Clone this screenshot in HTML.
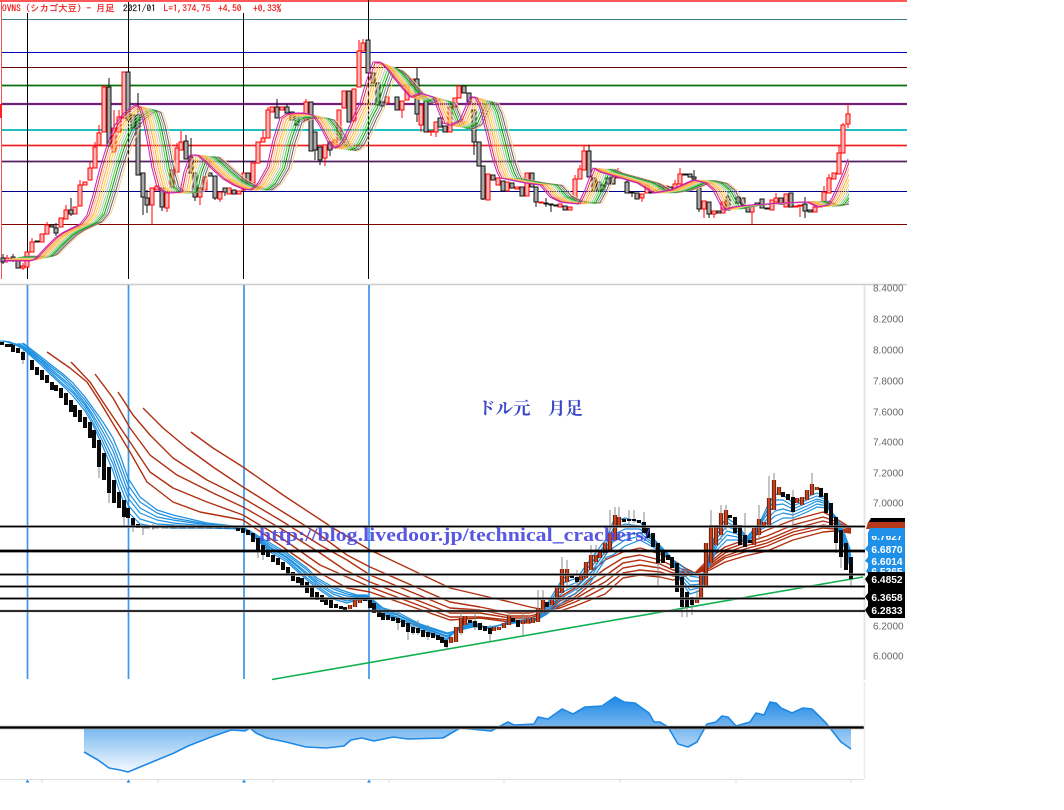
<!DOCTYPE html>
<html lang="ja"><head><meta charset="utf-8"><title>Chart</title>
<style>html,body{margin:0;padding:0;background:#fff}svg{display:block}</style></head>
<body>
<svg xmlns="http://www.w3.org/2000/svg" width="1064" height="810" viewBox="0 0 1064 810">
<defs>
<clipPath id="c1"><rect x="0" y="0" width="849" height="280"/></clipPath>
<clipPath id="c2"><rect x="866" y="536" width="40" height="8"/></clipPath>
<clipPath id="c3"><rect x="866" y="565" width="40" height="7"/></clipPath>
<linearGradient id="g" gradientUnits="userSpaceOnUse" x1="0" y1="697" x2="0" y2="775"><stop offset="0" stop-color="#1e88e5"/><stop offset="1" stop-color="#ffffff"/></linearGradient>
<polyline id="r" fill="none" stroke-width="1" stroke-linejoin="round" points="2,261 30,261 35,259 45,248 55,238 62,233 70,229 80,224 87,215 93,195 100,168 107,145 115,125 122,115 130,108 135,105 139,107 143,120 148,145 152,168 157,187 163,192 170,193 180,192 184,172 190,155 197,155 205,162 213,170 223,179 233,185 243,189 250,190 258,183 267,167 273,140 280,118 286,114 293,113 303,113 312,115 318,123 323,132 328,142 333,148 338,146 343,140 350,125 355,113 360,103 366,82 373,62 380,62 386,68 393,77 402,88 410,97 420,93 433,97 438,110 443,123 450,125 460,120 465,108 470,97 475,97 480,108 483,120 488,140 492,157 497,172 500,178 510,180 525,183 540,185 550,197 560,202 567,203 578,204 585,190 593,168 600,172 617,177 637,183 653,193 670,190 693,180 705,183 713,190 718,200 723,210 733,207 750,205 783,203 807,202 817,207 827,205 832,198 837,187 843,173 848,159"/>
<path id="bc" fill="none" d="M350 605V609M355 600V607M360 599V603M451 637V643M456 627V642M461 618V633M465 616V625M494 627V631M499 627V630M504 623V628M509 616V625M523 620V624M528 619V623M533 618V623M538 608V622M543 600V613M552 600V605M557 587V598M562 569V593M567 569V582M581 575V580M586 562V578M591 555V570M596 555V562M600 552V558M605 543V553M610 533V550M615 515V540M619 517V527M697 597V603M701 575V598M706 543V587M711 525V563M716 525V545M721 513V535M726 510V525M754 528V545M759 519V535M764 522V527M769 498V525M774 480V510M779 487V495M797 498V503M802 497V505M807 490V500M812 484V495M817 487V490"/>
</defs>

<!-- TOP CHART -->
<path d="M0 1H907" stroke="#ff2020" stroke-width="1.6"/>
<path d="M1.5 0V279" stroke="#ff5050" stroke-width="1"/>
<path d="M1 104V118" stroke="#ff2020" stroke-width="2"/>
<path d="M0 284.5H907" stroke="#cccccc" stroke-width="1.5"/>
<g fill="none">
<path d="M2 19.5H907" stroke="#408080"/>
<path d="M2 52.5H907" stroke="#0000c0"/>
<path d="M2 67.5H907" stroke="#600000"/>
<path d="M2 85.5H907" stroke="#d8ecd8" stroke-width="3"/><path d="M2 85.5H907" stroke="#0a6a0a" stroke-width="1.4"/>
<path d="M2 104H907" stroke="#70207a" stroke-width="2.2"/>
<path d="M2 130H907" stroke="#20c0c0" stroke-width="2"/>
<path d="M2 145.5H907" stroke="#ffe0e0" stroke-width="3"/><path d="M2 145.5H907" stroke="#f02020" stroke-width="1.5"/>
<path d="M2 161.5H907" stroke="#e6d8e6" stroke-width="3"/><path d="M2 161.5H907" stroke="#502060" stroke-width="1.4"/>
<path d="M2 191.5H907" stroke="#000090"/>
<path d="M2 224.5H907" stroke="#800000"/>
<path d="M27.5 13V279M128.5 2V279M243.5 13V279M368.5 0V279" stroke="#000" stroke-width="1"/>
</g>
<!-- top wicks -->
<path fill="none" stroke="#f00" stroke-width="1" d="M7 255V263M23 263V270M32 238V242M47 222V225M66 205V210M80 180V185M90 162V168M95 142V147M99 125V133M104 85V87M114 110V128M119 110V117M152 205V225M167 208V212M177 143V148M181 131V142M200 197V205M220 199V202M263 130V138M268 107V110M306 99V102M325 158V166M359 40V51M363 39V43M402 110V118M421 125V132M431 132V136M436 132V137M575 175V179M580 165V169M584 146V151M618 168V173M642 198V202M647 180V185M675 180V184M680 168V174M704 209V218M714 214V218M752 212V224M776 193V198M800 206V217M839 146V153M843 123V125M848 103V128M824 186V192M829 174V178"/>
<path fill="none" stroke="#111" stroke-width="1" d="M3 254V264M13 254V262M56 223V236M71 198V216M109 78V87M138 93V115M143 197V215M147 190V213M162 207V211M186 135V141M191 138V157M195 197V201M215 198V200M225 192V196M277 99V107M287 104V107M315 150V160M320 160V165M330 150V156M417 68V79M417 114V122M474 142V155M483 199V200M536 202V207M546 198V207M551 205V212M589 145V151M627 175V182M632 193V197M694 170V177M699 209V212M709 214V218M728 192V197M805 197V204M805 211V218"/>
<!-- top red bodies -->
<path fill="#ffb4b4" stroke="#f00" stroke-width="1" d="M5 258h4V261h-4zM21 266h4V268h-4zM25 252h4V267h-4zM30 242h4V252h-4zM40 234h4V242h-4zM45 225h4V234h-4zM59 218h4V227h-4zM64 210h4V219h-4zM73 207h4V214h-4zM78 185h4V206h-4zM83 182h4V185h-4zM88 168h4V180h-4zM93 147h4V168h-4zM97 133h4V145h-4zM102 87h4V132h-4zM112 128h4V152h-4zM117 117h4V132h-4zM122 72h4V118h-4zM150 188h4V205h-4zM155 186h4V190h-4zM165 193h4V208h-4zM170 170h4V187h-4zM175 148h4V172h-4zM179 142h4V150h-4zM198 188h4V197h-4zM203 177h4V190h-4zM218 192h4V199h-4zM227 188h4V194h-4zM237 191h4V194h-4zM242 173h4V190h-4zM251 163h4V183h-4zM256 142h4V163h-4zM261 138h4V142h-4zM266 110h4V138h-4zM270 107h4V112h-4zM280 107h4V110h-4zM304 102h4V120h-4zM323 145h4V158h-4zM333 140h4V146h-4zM337 110h4V140h-4zM342 91h4V108h-4zM352 89h4V121h-4zM357 51h4V87h-4zM361 43h4V51h-4zM385 97h4V103h-4zM400 101h4V110h-4zM405 85h4V100h-4zM410 79h4V85h-4zM419 105h4V125h-4zM429 131h4V132h-4zM434 122h4V132h-4zM448 107h4V132h-4zM453 98h4V107h-4zM457 86h4V98h-4zM486 174h4V200h-4zM496 178h4V185h-4zM505 182h4V191h-4zM515 187h4V189h-4zM525 173h4V196h-4zM539 202h4V203h-4zM558 204h4V207h-4zM568 207h4V210h-4zM573 179h4V199h-4zM578 169h4V179h-4zM582 151h4V170h-4zM616 173h4V178h-4zM640 194h4V198h-4zM645 185h4V193h-4zM659 185h4V190h-4zM664 186h4V188h-4zM673 184h4V190h-4zM678 174h4V184h-4zM702 201h4V209h-4zM712 211h4V214h-4zM721 202h4V213h-4zM750 207h4V212h-4zM770 200h4V210h-4zM774 198h4V202h-4zM784 194h4V207h-4zM794 206h4V207h-4zM798 205h4V206h-4zM813 207h4V212h-4zM818 202h4V207h-4zM822 192h4V204h-4zM827 178h4V193h-4zM832 173h4V179h-4zM837 153h4V174h-4zM841 125h4V153h-4zM846 114h4V124h-4z"/>
<!-- top black bodies -->
<path fill="#a8a8a8" stroke="#111" stroke-width="1" d="M1 258h4V262h-4zM11 257h4V259h-4zM16 261h4V268h-4zM35 241h4V242h-4zM50 225h4V227h-4zM54 228h4V233h-4zM69 210h4V214h-4zM107 87h4V146h-4zM126 72h4V120h-4zM131 115h4V128h-4zM136 115h4V175h-4zM141 173h4V197h-4zM145 198h4V205h-4zM160 188h4V207h-4zM184 141h4V159h-4zM189 157h4V173h-4zM193 173h4V197h-4zM208 173h4V176h-4zM213 176h4V198h-4zM223 188h4V192h-4zM232 190h4V194h-4zM246 173h4V183h-4zM275 107h4V118h-4zM285 107h4V113h-4zM290 112h4V120h-4zM295 113h4V125h-4zM309 102h4V151h-4zM313 132h4V150h-4zM318 147h4V160h-4zM328 142h4V150h-4zM347 91h4V122h-4zM366 40h4V73h-4zM371 73h4V83h-4zM376 83h4V105h-4zM381 102h4V106h-4zM395 97h4V110h-4zM415 79h4V114h-4zM424 100h4V132h-4zM438 118h4V127h-4zM443 126h4V132h-4zM462 86h4V93h-4zM467 93h4V102h-4zM472 110h4V142h-4zM477 142h4V166h-4zM481 166h4V199h-4zM491 175h4V180h-4zM501 181h4V191h-4zM510 183h4V188h-4zM520 187h4V196h-4zM530 173h4V187h-4zM534 187h4V202h-4zM544 203h4V204h-4zM549 204h4V205h-4zM554 205h4V206h-4zM563 206h4V210h-4zM587 151h4V177h-4zM592 178h4V191h-4zM597 182h4V191h-4zM601 185h4V190h-4zM606 178h4V184h-4zM611 177h4V184h-4zM625 182h4V193h-4zM630 192h4V193h-4zM635 193h4V199h-4zM649 192h4V193h-4zM654 190h4V192h-4zM668 187h4V190h-4zM683 174h4V175h-4zM688 174h4V177h-4zM692 177h4V179h-4zM697 188h4V209h-4zM707 202h4V214h-4zM717 211h4V213h-4zM726 197h4V210h-4zM736 197h4V203h-4zM741 198h4V205h-4zM746 208h4V212h-4zM755 203h4V205h-4zM760 199h4V208h-4zM765 208h4V209h-4zM779 198h4V204h-4zM789 193h4V207h-4zM803 204h4V211h-4zM808 210h4V212h-4z"/>
<!-- top ribbon -->
<g clip-path="url(#c1)">
<use href="#r" stroke="#ffc890" transform="matrix(1 0 0 .9285 24 13.6)"/>
<use href="#r" stroke="#606060" transform="matrix(1 0 0 .935 21.8 12.35)"/>
<use href="#r" stroke="#909090" transform="matrix(1 0 0 .9415 19.6 11.1)"/>
<use href="#r" stroke="#109010" transform="matrix(1 0 0 .948 17.4 9.88)"/>
<use href="#r" stroke="#30e030" transform="matrix(1 0 0 .9545 15.2 8.65)"/>
<use href="#r" stroke="#c0c0c0" transform="matrix(1 0 0 .961 13 7.41)"/>
<use href="#r" stroke="#e8cc98" transform="matrix(1 0 0 .9675 10.8 6.18)"/>
<use href="#r" stroke="#ffd030" transform="matrix(1 0 0 .974 8.6 4.94)"/>
<use href="#r" stroke="#ffa848" transform="matrix(1 0 0 .9805 6.4 3.71)"/>
<use href="#r" stroke="#ffb098" transform="matrix(1 0 0 .987 4.2 2.47)"/>
<use href="#r" stroke="#e83030" transform="matrix(1 0 0 .9935 2.1 1.24)"/>
<use href="#r" stroke="#c020c8"/>
</g>
<g font-family="'IPAGothic','Noto Sans CJK JP',monospace" font-size="9.4" fill="#f01010" stroke="#f01010" stroke-width=".15">
<text x="2" y="11.5">OVNS (シカゴ大豆) - 月足</text>
<text x="123" y="11.5" fill="#111" stroke="#111">2021/01</text>
<text x="163.5" y="11.5">L=1,374.75</text>
<text x="218" y="11.5">+4.50</text>
<text x="253" y="11.5">+0.33%</text>
</g>

<!-- LOWER CHART -->
<path d="M864.5 285V680" stroke="#e4e4e4" stroke-width="2"/>
<path fill="none" stroke="#3b97ea" stroke-width="1.7" d="M27.5 285V679M128.5 285V679M244 285V679M369 285V679"/>
<path d="M272 679.5L863 577" stroke="#10b050" stroke-width="1.6" fill="none"/>

<!-- brown -->
<g fill="none" stroke="#b03010" stroke-width="1.4" stroke-linejoin="round">
<polyline points="191,432 213,448 243,467 283,495 333,528 370,550 450,588 480,595 510,602 530,607 545,610 560,611 575,606 590,600 605,594 623,578 640,575 660,577 673,580 685,576 695,573 710,570 725,562 745,556 767,551 793,540 823,532 835,531 851,533"/>
<polyline points="143,408 163,428 187,448 213,467 243,487 283,512 317,533 347,555 370,567 450,602 480,607 510,613 530,613 545,610 560,608 575,602 590,595 605,587 623,573 640,570 660,572 673,576 685,575 695,573 710,568 725,558 745,552 767,546 793,535 823,528 835,529 851,532"/>
<polyline points="118,392 133,415 150,435 173,458 207,480 243,498 280,520 320,545 347,560 370,575 450,608 480,610 510,616 530,616 545,612 560,606 575,599 590,590 605,582 623,568 640,565 660,568 673,573 685,573 695,573 710,566 725,556 745,549 767,543 793,532 823,525 835,527 851,531"/>
<polyline points="95,374 113,398 130,428 150,455 177,475 213,493 243,507 280,528 320,553 345,570 370,582 450,613 480,613 510,618 530,618 545,613 560,604 575,597 590,585 605,576 623,563 640,560 660,564 673,570 685,572 695,573 710,564 725,553 745,546 767,540 793,529 823,521 835,524 851,530"/>
<polyline points="71,362 90,382 103,402 130,442 150,472 173,488 207,502 243,515 280,537 320,565 347,577 370,587 450,617 480,617 510,620 530,621 545,614 560,601 575,594 590,580 605,569 623,558 640,555 660,560 673,566 685,570 695,573 710,562 725,550 745,543 767,536 793,525 823,517 835,521 851,529"/>
<polyline points="47,352 70,368 87,382 100,402 130,452 147,482 173,502 200,512 243,520 280,545 320,573 347,588 370,592 450,620 480,618 510,622 530,623 545,615 560,597 575,588 590,573 605,560 623,552 640,548 660,554 673,560 685,568 695,573 710,558 725,547 745,540 767,530 793,520 823,512 835,518 851,528"/>
</g>
<!-- blue -->
<g fill="none" stroke="#1e90e0" stroke-width="1.2" stroke-linejoin="round">
<polyline points="0,341 10,342 23,349 40,364 50,374 63,386 73,396 85,411 93,425 103,447 113,471 120,493 128,512 140,524 157,527 173,528 207,528 243,529 255,538 270,552 287,562 307,580 317,588 333,599 347,603 357,600 367,600 383,615 397,620 420,630 447,640 460,626 473,622 490,629 507,622 537,618 547,604 563,578 580,574 590,560 607,538 613,522 625,518 640,522 653,538 670,556 680,580 690,594 702,590 710,550 717,530 727,518 737,525 747,537 760,522 768,505 775,494 783,495 793,503 807,497 817,493 827,498 837,525 845,550 851,570"/>
<polyline points="3,341 10,342 23,348 40,362 50,372 63,384 73,393 85,408 93,422 103,442 113,464 120,485 128,505 140,519 157,524 173,525 207,527 243,529 255,537 270,550 287,560 307,578 317,586 333,597 347,601 357,599 367,599 383,614 397,618 420,628 447,639 460,627 473,623 490,629 507,622 537,618 547,606 563,583 580,577 590,565 607,542 613,529 625,524 640,526 653,539 670,556 680,577 690,590 702,587 710,553 717,534 727,522 737,528 747,538 760,524 768,509 775,500 783,500 793,506 807,500 817,496 827,500 837,524 845,547 851,566"/>
<polyline points="7,342 23,347 40,361 50,370 63,381 73,391 85,405 93,418 103,437 113,458 120,478 128,498 140,513 157,520 173,523 207,526 243,528 255,536 270,548 287,558 307,575 317,584 333,594 347,599 357,598 367,598 383,612 397,617 420,627 447,637 460,628 473,624 490,628 507,623 537,619 547,608 563,588 580,581 590,569 607,546 613,535 625,529 640,529 653,541 670,556 680,574 690,585 702,584 710,556 717,538 727,526 737,531 747,539 760,525 768,513 775,505 783,504 793,509 807,503 817,499 827,502 837,522 845,544 851,563"/>
<polyline points="12,343 23,346 40,359 50,368 63,379 73,388 85,403 93,415 103,432 113,451 120,470 128,492 140,508 157,517 173,520 207,525 243,528 255,536 270,547 287,557 307,573 317,582 333,592 347,596 357,597 367,597 383,611 397,615 420,626 447,636 460,628 473,625 490,628 507,623 537,619 547,610 563,592 580,584 590,574 607,549 613,542 625,535 640,533 653,543 670,557 680,571 690,581 702,581 710,559 717,542 727,531 737,534 747,541 760,527 768,518 775,511 783,509 793,512 807,506 817,501 827,504 837,521 845,541 851,559"/>
<polyline points="17,344 23,344 40,358 50,366 63,376 73,386 85,400 93,411 103,427 113,445 120,463 128,485 140,502 157,513 173,518 207,524 243,527 255,535 270,545 287,555 307,570 317,580 333,589 347,594 357,596 367,596 383,609 397,614 420,625 447,634 460,629 473,626 490,627 507,624 537,620 547,612 563,597 580,587 590,578 607,553 613,548 625,540 640,536 653,545 670,557 680,568 690,576 702,578 710,562 717,546 727,535 737,537 747,542 760,528 768,522 775,516 783,513 793,515 807,509 817,504 827,506 837,519 845,538 851,556"/>
<polyline points="23,343 40,356 50,364 63,374 73,383 85,397 93,408 103,422 113,438 120,455 128,478 140,497 157,510 173,515 207,523 243,527 255,534 270,543 287,553 307,568 317,578 333,587 347,592 357,595 367,595 383,608 397,612 420,624 447,633 460,630 473,627 490,627 507,624 537,620 547,614 563,602 580,590 590,583 607,557 613,555 625,546 640,540 653,547 670,558 680,565 690,572 702,575 710,565 717,550 727,540 737,540 747,543 760,530 768,526 775,522 783,518 793,518 807,512 817,507 827,508 837,518 845,535 851,552"/>
</g>
<!-- lower wicks -->
<path fill="none" stroke="#888" stroke-width="1" d="M23 350V364M99 440V478M109 467V503M124 500V525M133 518V532M143 526V535M153 524V530M258 538V558M263 545V560M312 587V600M398 612V630M408 620V640M413 622V635M418 620V635M428 625V640M447 647V650M461 612V635M475 612V630M490 625V642M509 610V625M523 612V636M538 590V622M543 590V613M562 557V575M567 560V590M577 570V592M591 545V570M596 545V565M605 540V560M610 510V550M615 507V540M619 507V527M629 510V525M634 510V523M644 512V530M658 543V587M682 607V617M687 607V617M692 605V615M697 590V600M711 510V563M721 505V540M726 505V530M745 513V547M759 505V540M769 476V500M774 473V510M793 490V525M812 473V495M836 517V553M841 530V568M851 579V588"/>
<!-- lower black bodies -->
<path fill="none" stroke="#0a0a0a" stroke-width="4" d="M2 342V345M7 344V347M11 344V347M13 345V352M18 348V353M23 352V360M32 360V370M37 367V375M42 370V380M47 375V383M52 382V390M56 385V391M61 388V398M66 393V405M71 400V412M75 405V417M80 410V422M85 417V428M90 422V438M94 430V448M99 440V467M104 453V480M109 467V493M114 480V503M119 492V508M124 500V517M128 508V518M133 518V527M138 524V528M143 526V528M238 528V531M243 528V533M248 530V535M253 533V542M258 538V552M263 545V555M268 550V557M273 555V562M278 558V565M283 562V570M288 567V575M293 572V581M298 577V583M302 578V587M307 582V593M312 587V597M317 592V600M322 595V602M326 598V605M331 600V608M336 604V608M341 606V609M345 607V610M365 598V601M370 600V608M374 603V613M379 610V617M383 613V620M388 615V620M393 617V621M398 618V623M403 620V627M408 623V632M413 627V633M418 628V633M423 630V637M428 632V637M433 633V638M438 635V640M442 637V643M446 640V647M470 620V623M475 621V627M480 623V630M485 626V631M490 628V634M513 618V622M518 620V627M547 602V607M572 575V578M577 577V582M624 519V522M629 519V521M634 519V521M639 520V523M644 522V533M648 528V538M653 533V547M658 543V563M663 552V563M668 555V560M672 557V568M677 563V592M682 577V607M687 592V607M692 597V605M730 515V518M735 517V533M740 525V545M745 535V547M750 540V543M783 492V497M788 494V500M793 497V512M821 488V497M826 493V513M831 503V527M836 517V543M841 530V557M846 543V570M851 557V579"/>
<path d="M143 527.5H238" stroke="#111" stroke-width="1.4" stroke-dasharray="7 2" fill="none"/>
<!-- lower brown bodies -->
<use href="#bc" stroke="#3a1408" stroke-width="4.2"/>
<use href="#bc" stroke="#c8401c" stroke-width="2.8"/>
<!-- lower horizontal lines -->
<g fill="none">
<path d="M0 526.5H865M0 574.5H865M0 586.5H865M0 598.5H865M0 611H865" stroke="#aaa" stroke-width="2.6"/>
<path d="M0 526.5H865M0 574.5H865M0 586.5H865M0 598.5H865M0 611H865" stroke="#000" stroke-width="1.5"/>
<path d="M0 551H865" stroke="#000" stroke-width="2.8"/>
</g>
<!-- overlay text -->
<text transform="translate(259 541) scale(1.15 1)" x="0" y="0" font-family="'Liberation Serif','Noto Serif CJK SC',serif" font-size="19" font-weight="700" fill="#4a4ae0" fill-opacity=".92" textLength="340" lengthAdjust="spacing">http://blog.livedoor.jp/technical_crachers/</text>
<text x="478" y="414.5" font-family="'Liberation Serif','Noto Serif CJK SC',serif" font-size="17.5" font-weight="700" fill="#3a48c8">ドル元　月足</text>
<!-- axis labels -->
<g font-family="'Liberation Sans',sans-serif" font-size="10" fill="#666">
<text x="873" y="291.3">8.4000</text><text x="873" y="322.3">8.2000</text><text x="873" y="353.3">8.0000</text><text x="873" y="384.3">7.8000</text><text x="873" y="415.3">7.6000</text><text x="873" y="445.3">7.4000</text><text x="873" y="476.3">7.2000</text><text x="873" y="506.3">7.0000</text><text x="873" y="629.3">6.2000</text><text x="873" y="659.3">6.0000</text>
</g>
<!-- badges -->
<polygon points="871,518 905,518 905,523 868,523" fill="#000"/>
<polygon points="868,522 905,522 905,529 866,529" fill="#b53a1c"/>
<polygon points="870,528 905,528 905,574 868,574 866,571 868,568 868,563 865,561 868,557 868,552 865,549 868,545 868,533" fill="#1e90e8"/>
<polygon points="868,572 905,572 905,618 870,618 868,615 865,610 868,606 868,601 865,597 868,593 868,584 865,579 868,575" fill="#000"/>
<g font-family="'Liberation Sans',sans-serif" font-size="10.2" font-weight="700" fill="#fff" text-anchor="middle">
<text x="887" y="553">6.6870</text><text x="887" y="565">6.6014</text>
<text x="887" y="583">6.4852</text><text x="887" y="601">6.3658</text><text x="887" y="614">6.2833</text>
<g clip-path="url(#c2)"><text x="887" y="540">6.7627</text></g>
<g clip-path="url(#c3)"><text x="887" y="575">6.5365</text></g>
</g>

<!-- BOTTOM INDICATOR -->
<polygon fill="url(#g)" points="84,727 84,752 98,760 109,768 120,770 128,772 140,767 157,760 174,753 188,746 211,737 231,730 245,731 250,728 256,733 267,738 286,742 306,747 326,748 344,746 351,740 362,738 374,741 393,737 408,739 443,738 460,728 491,731 508,722 514,725 534,724 538,717 548,719 562,709 573,714 585,707 602,706 615,697 624,702 635,703 649,713 654,722 660,722 668,727 678,744 688,747 697,742 707,724 716,722 722,716 728,717 736,726 750,722 756,713 764,715 770,702 776,703 781,708 792,713 803,708 812,709 826,723 841,742 851,749 851,727"/>
<polyline fill="none" stroke="#1e88e5" stroke-width="1.6" stroke-linejoin="round" points="84,752 98,760 109,768 120,770 128,772 140,767 157,760 174,753 188,746 211,737 231,730 245,731 250,728 256,733 267,738 286,742 306,747 326,748 344,746 351,740 362,738 374,741 393,737 408,739 443,738 460,728 491,731 508,722 514,725 534,724 538,717 548,719 562,709 573,714 585,707 602,706 615,697 624,702 635,703 649,713 654,722 660,722 668,727 678,744 688,747 697,742 707,724 716,722 722,716 728,717 736,726 750,722 756,713 764,715 770,702 776,703 781,708 792,713 803,708 812,709 826,723 841,742 851,749"/>
<path d="M0 727.5H864" stroke="#999" stroke-width="3.4"/>
<path d="M0 727.5H864" stroke="#000" stroke-width="2"/>
<path d="M864.5 682V779" stroke="#ececec" stroke-width="1.5"/>
<path d="M0 779.5H864" stroke="#dddddd" stroke-width="1"/>
<path d="M42 780v3M158 780v3M273 780v3M389 780v3M504 780v3M620 780v3M736 780v3M851 780v3" stroke="#ddd" stroke-width="1"/>
<path d="M25.5 782.5L27.5 779.5L29.5 782.5zM126.5 782.5L128.5 779.5L130.5 782.5zM242 782.5L244 779.5L246 782.5zM367 782.5L369 779.5L371 782.5z" fill="#1e88e5"/>
</svg>
</body></html>
